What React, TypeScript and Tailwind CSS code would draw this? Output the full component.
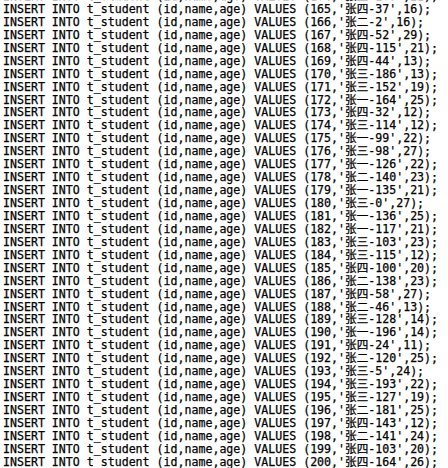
const rows: [number, string, number][] = [
  [164, '张三-163', 21],
  [165, '张四-37', 16],
  [166, '张二-2', 16],
  [167, '张四-52', 29],
  [168, '张四-115', 21],
  [169, '张四-44', 13],
  [170, '张三-186', 13],
  [171, '张三-152', 19],
  [172, '张一-164', 25],
  [173, '张四-32', 12],
  [174, '张三-114', 12],
  [175, '张一-99', 22],
  [176, '张三-98', 27],
  [177, '张一-126', 22],
  [178, '张二-140', 23],
  [179, '张一-135', 21],
  [180, '张三-0', 27],
  [181, '张一-136', 25],
  [182, '张一-117', 21],
  [183, '张三-103', 23],
  [184, '张三-115', 12],
  [185, '张四-100', 20],
  [186, '张二-138', 23],
  [187, '张四-58', 27],
  [188, '张二-46', 13],
  [189, '张三-128', 14],
  [190, '张一-196', 14],
  [191, '张四-24', 11],
  [192, '张二-120', 25],
  [193, '张三-5', 24],
  [194, '张三-193', 22],
  [195, '张三-127', 19],
  [196, '张二-181', 25],
  [197, '张四-143', 12],
  [198, '张二-141', 24],
  [199, '张四-103', 20],
  [200, '张四-164', 26],
];

export default function App() {
  return (
    <div className="h-[468px] w-[448px] overflow-hidden bg-white">
      {/* SQL dump, first row is half scrolled out at the top */}
      <div
        className="-mt-[10px] pl-[3px] text-[11.6px] leading-[12.94px] text-black whitespace-pre [-webkit-text-stroke:0.25px_#000]"
        style={{ fontFamily: '"DejaVu Sans Mono", "Noto Sans CJK SC", monospace' }}
      >
        {rows.map(([id, name, age]) => (
          <div key={id}>
            INSERT INTO t_student (id,name,age) VALUES ({id},'{name}',{age});
          </div>
        ))}
      </div>
    </div>
  );
}
